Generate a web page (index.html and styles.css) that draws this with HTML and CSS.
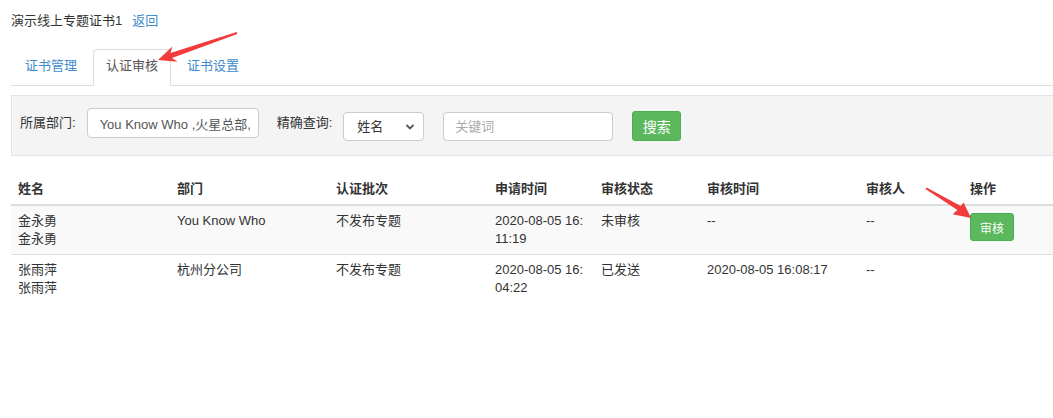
FILE: index.html
```html
<!DOCTYPE html>
<html lang="zh-CN">
<head>
    <meta charset="UTF-8">
    <meta name="viewport" content="width=device-width, initial-scale=1.0">
    <title>认证审核</title>
    <link rel="stylesheet" href="styles.css">
</head>
<body>
    <div class="page">
        <div class="title">演示线上专题证书1<a href="#" class="back">返回</a></div>

        <ul class="tabs">
            <li><a href="#">证书管理</a></li>
            <li class="active"><a href="#">认证审核</a></li>
            <li><a href="#">证书设置</a></li>
        </ul>

        <form class="filter">
            <label>所属部门:</label>
            <input type="text" class="dept" value="You Know Who ,火星总部,杭州分公司">
            <label class="label-gap">精确查询:</label>
            <div class="select-wrap">
                <select>
                    <option>姓名</option>
                    <option>手机号</option>
                </select>
                <svg class="chevron" width="10" height="8" viewBox="0 0 10 8"><path d="M1.5 2 L5 5.5 L8.5 2" fill="none" stroke="#555" stroke-width="1.8"/></svg>
            </div>
            <input type="text" class="keyword" placeholder="关键词">
            <button type="button" class="btn btn-search">搜索</button>
        </form>

        <table class="list">
            <colgroup>
                <col style="width: 159px">
                <col style="width: 159px">
                <col style="width: 159px">
                <col style="width: 106px">
                <col style="width: 106px">
                <col style="width: 159px">
                <col style="width: 104px">
                <col>
            </colgroup>
            <thead>
                <tr>
                    <th>姓名</th>
                    <th>部门</th>
                    <th>认证批次</th>
                    <th>申请时间</th>
                    <th>审核状态</th>
                    <th>审核时间</th>
                    <th>审核人</th>
                    <th>操作</th>
                </tr>
            </thead>
            <tbody>
                <tr class="odd">
                    <td>金永勇<br>金永勇</td>
                    <td>You Know Who</td>
                    <td>不发布专题</td>
                    <td class="date">2020-08-05 16:11:19</td>
                    <td>未审核</td>
                    <td>--</td>
                    <td>--</td>
                    <td><button type="button" class="btn btn-audit">审核</button></td>
                </tr>
                <tr>
                    <td>张雨萍<br>张雨萍</td>
                    <td>杭州分公司</td>
                    <td>不发布专题</td>
                    <td class="date">2020-08-05 16:04:22</td>
                    <td>已发送</td>
                    <td>2020-08-05 16:08:17</td>
                    <td>--</td>
                    <td></td>
                </tr>
            </tbody>
        </table>
    </div>

    <!-- red annotation arrows -->
    <svg class="marks" width="1053" height="418" viewBox="0 0 1053 418">
        <polygon points="158,60 177.6,61.8 172,57.9 237.3,33.9 236.7,32.1 170.4,53.1 172.4,46.6" fill="#f23b3b"/>
        <polygon points="971,218 963.5,202.5 960.8,206 926.5,187.6 925.5,189 957.4,210 952.7,214.3" fill="#f23b3b"/>
    </svg>
</body>
</html>
```

FILE: styles.css
```css
html, body {
    margin: 0;
    padding: 0;
    background: #fff;
    overflow: hidden;
}

body {
    position: relative;
    font-family: "Liberation Sans", "Noto Sans CJK SC", sans-serif;
    font-size: 13px;
    line-height: 18px;
    color: #333;
}

.page {
    padding-left: 11px;
}

.title {
    padding-top: 12px;
}

.back {
    margin-left: 10px;
    color: #428bca;
    text-decoration: none;
}

.tabs {
    display: flex;
    list-style: none;
    margin: 19px 0 0;
    padding: 0;
    border-bottom: 1px solid #ddd;
}

.tabs a {
    display: block;
    padding: 7px 12px 10px;
    margin-right: 3px;
    margin-bottom: -1px;
    border: 1px solid transparent;
    border-radius: 4px 4px 0 0;
    color: #428bca;
    text-decoration: none;
}

.tabs li:first-child a {
    margin-left: 1px;
}

.tabs .active a {
    color: #555;
    background: #fff;
    border-color: #ddd;
    border-bottom-color: transparent;
}

.filter {
    display: flex;
    align-items: flex-start;
    margin-top: 9px;
    padding: 12px 0 14px 8px;
    background: #f4f4f4;
    border: 1px solid #e3e3ea;
    border-right: none;
}

.filter label {
    line-height: 30px;
    margin-right: 11px;
}

.filter .label-gap {
    margin-left: 18px;
    margin-right: 11px;
}

.filter input {
    box-sizing: border-box;
    font-family: inherit;
    font-size: 13px;
    color: #555;
    background: #fff;
    border: 1px solid #ccc;
    border-radius: 4px;
    outline: none;
}

.dept {
    width: 172px;
    height: 30px;
    padding: 0 8px 0 12px;
}

.select-wrap {
    position: relative;
    margin-top: 4px;
}

.select-wrap select {
    box-sizing: border-box;
    width: 81px;
    height: 29px;
    padding: 0 0 0 13px;
    font-family: inherit;
    font-size: 13px;
    color: #333;
    background: #fff;
    border: 1px solid #ccc;
    border-radius: 4px;
    appearance: none;
    -webkit-appearance: none;
}

.chevron {
    position: absolute;
    right: 9px;
    top: 11px;
}

.keyword {
    width: 170px;
    height: 29px;
    margin-top: 4px;
    margin-left: 19px;
    padding: 0 11px;
}

.keyword::placeholder {
    color: #aaa;
}

.btn {
    box-sizing: border-box;
    font-family: inherit;
    color: #fff;
    background: #5cb85c;
    border: 1px solid #4cae4c;
    border-radius: 3px;
    padding: 0;
    cursor: pointer;
}

.btn:hover {
    background: #449d44;
}

.btn-search {
    width: 49px;
    height: 30px;
    margin-top: 3px;
    margin-left: 19px;
    font-size: 14px;
}

.btn-audit {
    width: 44px;
    height: 28px;
    font-size: 12px;
    vertical-align: top;
    margin-top: 1px;
}

.list {
    width: 100%;
    margin-top: 18px;
    border-collapse: collapse;
    table-layout: fixed;
}

.list th,
.list td {
    padding: 6px 7px;
    text-align: left;
    vertical-align: top;
}

.list th {
    font-weight: bold;
    border-bottom: 2px solid #ddd;
}

.list td {
    border-top: 1px solid #ddd;
}

.list .odd td {
    background: #f9f9f9;
}

.list .date {
    word-break: break-all;
}

.marks {
    position: absolute;
    top: 0;
    left: 0;
    pointer-events: none;
}
```
